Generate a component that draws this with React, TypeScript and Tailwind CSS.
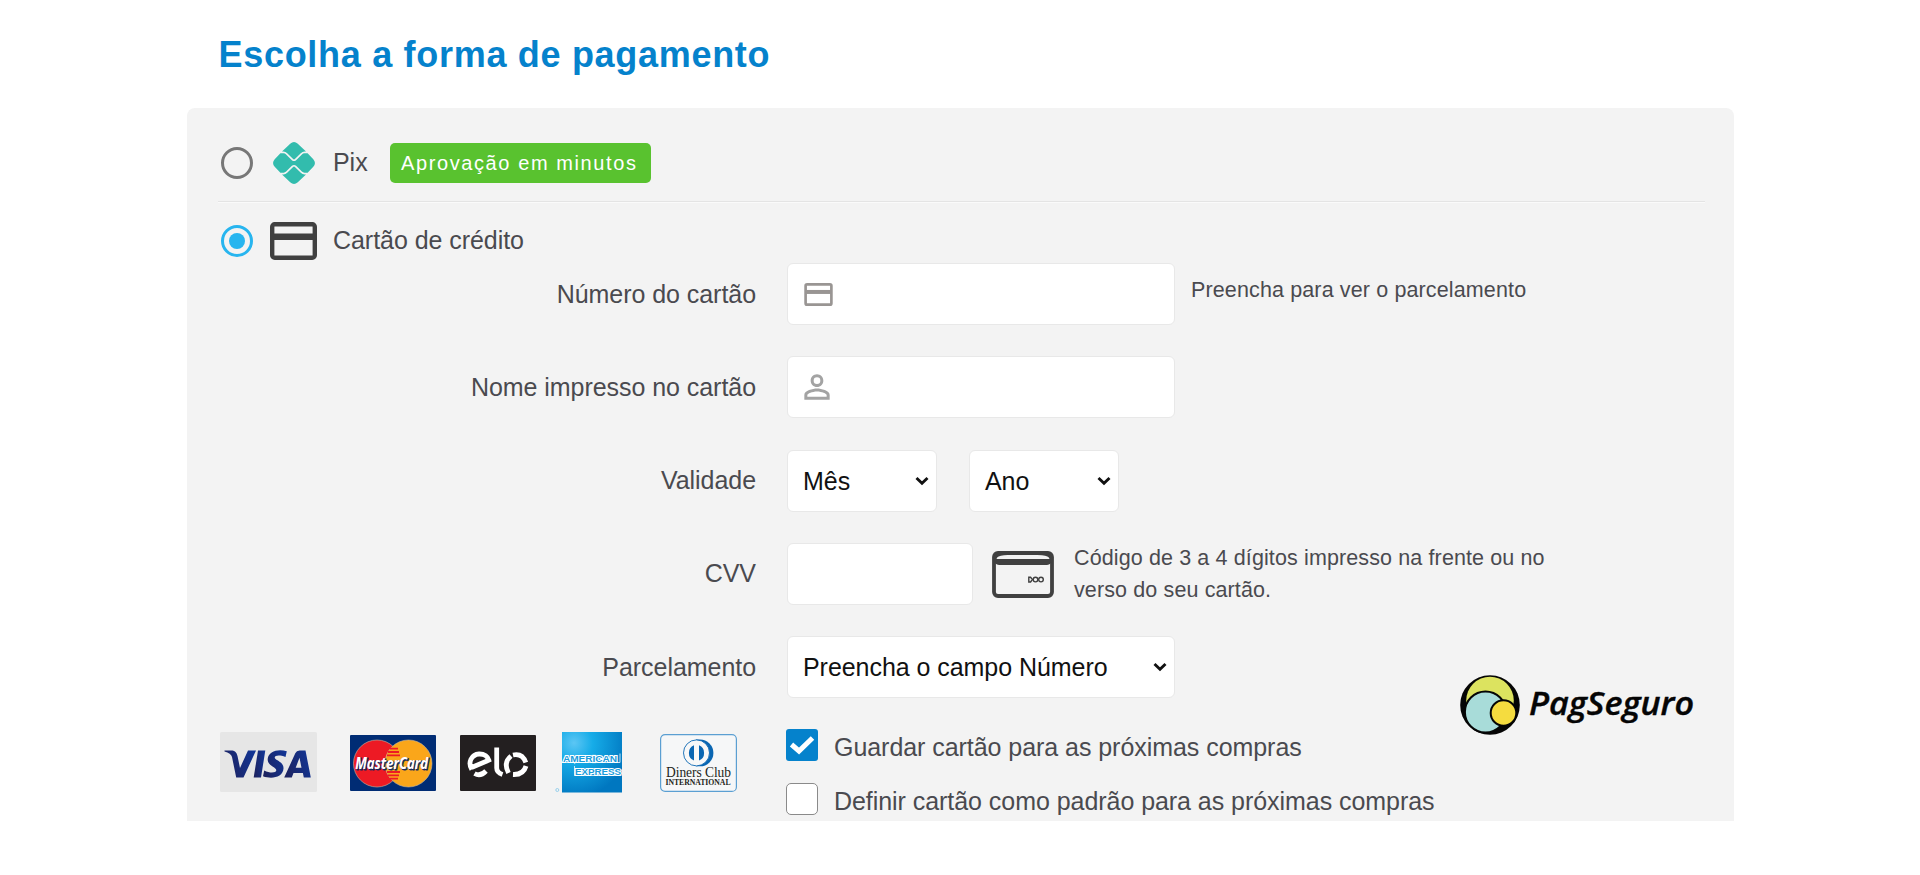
import type { ReactNode } from "react";
import { MdPersonOutline } from "react-icons/md";

const FIELD = "flex h-[62px] items-center rounded-md border border-[#e8e8e8] bg-white";

function Row({ label, children }: { label: string; children?: ReactNode }) {
  return (
    <div className="flex h-[62px] items-start">
      <div className="w-[538px] pt-[12.500px] text-right leading-9">{label}</div>
      <div className="ml-[31px] flex items-start">{children}</div>
    </div>
  );
}

function Chevron() {
  return (
    <svg className="h-[10px] w-[14px]" viewBox="0 0 14 10" fill="none">
      <path d="M1.500 2 L7 7.200 L12.500 2" stroke="#111" strokeWidth="2.900" />
    </svg>
  );
}

function Select({ text, width }: { text: string; width: string }) {
  return (
    <div className={`${FIELD} ${width} justify-between pr-[7px] pl-[15px] text-[#111]`}>
      <span className="leading-9">{text}</span>
      <Chevron />
    </div>
  );
}

function CardIcon({ className }: { className: string }) {
  return (
    <svg className={className} viewBox="0 0 47 38" fill="none" stroke="currentColor">
      <rect x="2.200" y="2.200" width="42.600" height="33.600" rx="2.500" strokeWidth="4.400" />
      <path d="M2 14.800 H45" strokeWidth="6.600" />
    </svg>
  );
}

function PixIcon() {
  return (
    <svg className="h-[42px] w-[42px]" viewBox="0 0 42 42" fill="#32bcad">
      <path d="M9 9.600 L17.200 1.700 Q21 -1.600 24.800 1.700 L33 9.600 H31.600 Q29.400 9.600 27.800 11.200 L21.900 17 Q21 17.800 20.100 17 L14.200 11.200 Q12.600 9.600 10.400 9.600 Z" />
      <path d="M9 32.400 L17.200 40.300 Q21 43.600 24.800 40.300 L33 32.400 H31.600 Q29.400 32.400 27.800 30.800 L21.900 25 Q21 24.200 20.100 25 L14.200 30.800 Q12.600 32.400 10.400 32.400 Z" />
      <path d="M7.400 11.300 H10.600 Q12 11.300 13.100 12.400 L18.900 18.200 Q21 20 23.100 18.200 L28.900 12.400 Q30 11.300 31.400 11.300 H34.600 L40.300 17.200 Q43.600 21 40.300 24.800 L34.600 30.700 H31.400 Q30 30.700 28.900 29.600 L23.100 23.800 Q21 22 18.900 23.800 L13.100 29.600 Q12 30.700 10.600 30.700 H7.400 L1.700 24.800 Q-1.600 21 1.700 17.200 Z" />
    </svg>
  );
}

function CvvCard() {
  return (
    <svg className="h-[47px] w-[62px]" viewBox="0 0 62 47" fill="none">
      <rect x="2" y="2" width="58" height="43" rx="4" stroke="#404040" strokeWidth="3.800" />
      <path d="M2 2 H60 V14 H2 Z M4.500 8 H57.500 Q57 4.800 50 4.300 Q31 2.800 12 4.300 Q5 4.800 4.500 8 Z" fill="#404040" fillRule="evenodd" className="[clip-path:inset(0_round_5px)]" />
      <g stroke="#404040" strokeWidth="1.400">
        <path d="M36.800 26.200 H38.600 L40.400 28.500 L38.600 31 H36.800 Z" />
        <circle cx="43.500" cy="28.600" r="2.300" />
        <circle cx="49" cy="28.600" r="2.300" />
      </g>
    </svg>
  );
}

function Visa() {
  return (
    <svg className="h-[60px] w-[97px]" viewBox="0 0 97 60">
      <defs>
        <linearGradient id="visa" x1="0" x2="1" y1="0.6" y2="0.3">
          <stop offset="0" stopColor="#1d2360" />
          <stop offset="1" stopColor="#123595" />
        </linearGradient>
      </defs>
      <rect width="97" height="60" rx="1.500" fill="#e6e6e6" />
      <path d="M4.500 18.600 H12.500 Q16 18.800 17.500 24 L20 36 L28 18.600 H36 L23.500 45.500 H16.200 L12 25 Q11 21.500 4.500 19.600 Z" fill="url(#visa)" />
      <path d="M38 18.600 H45.300 L41 45.500 H33.700 Z" fill="url(#visa)" />
      <path d="M66.800 19.300 L65.500 25 C59.500 22.600 54.600 23.300 54.700 25.600 C54.900 28.600 64 29.600 63.500 36.600 C63 45.600 51.500 47.500 43 44.300 L44.200 38.500 C50 41.500 56.200 41 56.300 38.300 C56.400 35 47.300 34 47.700 27 C48.300 18.600 59.200 16.500 66.800 19.300 Z" fill="url(#visa)" />
      <path fillRule="evenodd" d="M79.600 18.600 H85.500 L90.800 45.500 H83.800 L82.900 41 H73.500 L71.800 45.500 H64.200 L75.300 21.300 Q76.500 18.600 79.600 18.600 Z M79.500 25.800 L75.700 35.700 H81.500 Z" fill="url(#visa)" />
    </svg>
  );
}

function Mastercard() {
  return (
    <svg className="h-[56px] w-[86px] overflow-visible" viewBox="0 0 86 56">
      <rect width="86" height="56" rx="1" fill="#002c74" />
      <g stroke="#c9b9a0" strokeWidth="0.600">
        <circle cx="27" cy="28.500" r="23.500" fill="#ed1a24" />
        <circle cx="58.500" cy="28.500" r="23.500" fill="#faa61a" />
      </g>
      <path d="M40 13.700 H48 M38 17 H49 M37 20.300 H50 M37 37 H50 M38 40.300 H49 M40 43.600 H48" stroke="#ed1a24" strokeWidth="1.800" />
      <g fontFamily="Open Sans, sans-serif" fontWeight="700" fontStyle="italic" fontSize="15.500">
        <text x="6.200" y="34.800" textLength="73" lengthAdjust="spacingAndGlyphs" fill="#10285f" stroke="#10285f" strokeWidth="0.800">MasterCard</text>
        <text x="5.200" y="33.800" textLength="73" lengthAdjust="spacingAndGlyphs" fill="#fff">MasterCard</text>
      </g>
    </svg>
  );
}

function Elo() {
  return (
    <svg className="h-[56px] w-[76px]" viewBox="0 0 76 56" fill="none">
      <rect width="76" height="56" rx="1" fill="#231f20" />
      <g stroke="#fff" strokeWidth="4.800">
        <path d="M11.800 34.500 C7.500 27.500 11.500 19.500 19 19 C24.500 18.800 28 22 28.800 25.200 L11.500 32.500" />
        <path d="M14.500 38.500 Q20.500 41.800 26 36" />
        <path d="M36.700 12.500 V33 Q36.700 37.500 42.500 39.500" />
        <path d="M51 21 Q43 27.500 48.500 38" />
        <path d="M53 20 Q62.500 18 65.800 27.500" />
        <path d="M66 31 Q63.500 40 53 39.500" />
      </g>
    </svg>
  );
}

function Amex() {
  return (
    <svg className="h-[61px] w-[68px]" viewBox="0 0 68 61">
      <defs>
        <radialGradient id="amex" cx="0.200" cy="0.180" r="0.900">
          <stop offset="0" stopColor="#5cc6f4" />
          <stop offset="0.350" stopColor="#16ace8" />
          <stop offset="1" stopColor="#0077c0" />
        </radialGradient>
      </defs>
      <rect x="7" width="60" height="60.500" fill="url(#amex)" />
      <path d="M7.500 30.500 H65 V21.500 M19.500 34 V43.500 H66.500" fill="none" stroke="#d9effa" strokeWidth="0.900" />
      <g fontFamily="Liberation Sans, sans-serif" fontWeight="700" fontSize="9.500" fill="#1a9cdc" stroke="#fff" strokeWidth="2.200" paintOrder="stroke">
        <text x="8" y="29.500" textLength="54" lengthAdjust="spacingAndGlyphs">AMERICAN</text>
        <text x="20" y="42.500" textLength="46" lengthAdjust="spacingAndGlyphs">EXPRESS</text>
      </g>
      <circle cx="2.300" cy="58" r="1.500" fill="none" stroke="#8ccbea" strokeWidth="0.900" />
    </svg>
  );
}

function Diners() {
  return (
    <svg className="h-[58px] w-[77px]" viewBox="0 0 77 58">
      <rect x="0.600" y="0.600" width="75.800" height="56.800" rx="4.500" fill="#f6f7f8" stroke="#5b9fd2" strokeWidth="1.200" />
      <path d="M36 5.500 H40 A13.300 13.300 0 0 1 40 32.300 H36 Z" fill="#0a66b2" />
      <circle cx="36.500" cy="18.900" r="13" fill="#f8f8f8" stroke="#0a66b2" strokeWidth="0.900" />
      <path d="M34 11.300 A8.200 8.200 0 0 0 34 26.500 Z M39 11.300 A8.200 8.200 0 0 1 39 26.500 Z" fill="#0a66b2" />
      <g fontFamily="Liberation Serif, serif" fill="#231f20">
        <text x="6" y="43" fontSize="14.500" textLength="65" lengthAdjust="spacingAndGlyphs">Diners Club</text>
        <text x="5.500" y="51" fontSize="7.500" fontWeight="700" textLength="65" lengthAdjust="spacingAndGlyphs">INTERNATIONAL</text>
      </g>
    </svg>
  );
}

function PagSeguro() {
  return (
    <svg className="h-[62px] w-[240px]" viewBox="0 0 240 62">
      <circle cx="30" cy="30" r="29.800" fill="#050505" />
      <circle cx="30" cy="25.600" r="23.800" fill="#dce35f" />
      <circle cx="25.500" cy="37" r="20.600" fill="#a8dcd9" stroke="#050505" strokeWidth="2" />
      <circle cx="43.500" cy="38" r="12.800" fill="#f5dc3f" stroke="#050505" strokeWidth="2" />
      <text x="69" y="40" fontFamily="Open Sans, sans-serif" fontWeight="600" fontStyle="italic" fontSize="33" textLength="165" lengthAdjust="spacingAndGlyphs" fill="#050505" stroke="#050505" strokeWidth="0.400">PagSeguro</text>
    </svg>
  );
}

export default function App() {
  return (
    <main className="h-[875px] w-[1920px] overflow-hidden bg-white pl-[187px] font-['Liberation_Sans',Arial,sans-serif] text-[25px] tracking-[-0.050px] text-[#4a4a4f]">
      <h1 className="h-[108px] pt-[31px] pl-[31.500px] text-[36px] leading-[48px] font-bold tracking-[0.700px] text-[#0582cc]">
        Escolha a forma de pagamento
      </h1>
      <section className="h-[713px] w-[1547px] overflow-hidden rounded-t-lg bg-[#f3f3f3] pr-[29px] pl-[31px]">
        <div className="flex h-[94px] items-center border-b border-[#e4e4e4] pt-4">
          <span className="ml-[3px] size-8 rounded-full border-[3px] border-[#777]" />
          <span className="ml-5"><PixIcon /></span>
          <span className="ml-[18px] w-[57px]">Pix</span>
          <span className="flex h-10 w-[261px] items-center rounded-[5px] bg-[#59c22f] pl-[11px] text-[20px] tracking-[1.600px] whitespace-nowrap text-white">
            Aprovação em minutos
          </span>
        </div>
        <div className="flex h-[61px] items-center border-t border-[#fafafa] pt-[15px]">
          <span className="ml-[3px] flex size-8 items-center justify-center rounded-full border-[3px] border-[#27b5ef]">
            <span className="size-4 rounded-full bg-[#27b5ef]" />
          </span>
          <CardIcon className="ml-[17px] h-[38px] w-[47px] text-[#404040]" />
          <span className="ml-[16px]">Cartão de crédito</span>
        </div>
        <div className="flex flex-col gap-[31.300px]">
          <Row label="Número do cartão">
            <div className={`${FIELD} w-[388px] pl-4`}>
              <CardIcon className="h-[23px] w-[29px] text-[#999593]" />
            </div>
            <span className="pt-3 pl-4 text-[21.500px] leading-[30px] tracking-[0.130px]">Preencha para ver o parcelamento</span>
          </Row>
          <Row label="Nome impresso no cartão">
            <div className={`${FIELD} w-[388px] pl-[10px]`}>
              <MdPersonOutline className="size-[38px] text-[#a3a3a3]" />
            </div>
          </Row>
          <Row label="Validade">
            <Select text="Mês" width="w-[150px]" />
            <span className="w-8" />
            <Select text="Ano" width="w-[150px]" />
          </Row>
          <Row label="CVV">
            <div className={`${FIELD} w-[186px]`} />
            <span className="pt-2 pl-[19px]"><CvvCard /></span>
            <p className="-mt-px w-[500px] pl-5 text-[21.500px] leading-[32.500px] tracking-[0.120px]">
              Código de 3 a 4 dígitos impresso na frente ou no verso do seu cartão.
            </p>
          </Row>
          <Row label="Parcelamento">
            <Select text="Preencha o campo Número" width="w-[388px]" />
          </Row>
        </div>
        <div className="flex">
          <div className="flex w-[568px] items-start pt-[34px] pl-0.5">
            <Visa />
            <span className="mt-[3px] ml-[33px]"><Mastercard /></span>
            <span className="mt-[3px] ml-6"><Elo /></span>
            <span className="ml-[19px]"><Amex /></span>
            <span className="mt-0.5 ml-[37px]"><Diners /></span>
          </div>
          <div className="w-[674px] pt-[31px]">
            <div className="flex h-8 items-center">
              <span className="flex size-8 items-center justify-center rounded-[3px] bg-[#0582cc]">
                <svg className="h-[20px] w-[26px]" viewBox="0 0 26 20" fill="none">
                  <path d="M2.500 9.500 L10 16 L23.500 3" stroke="#fff" strokeWidth="5" />
                </svg>
              </span>
              <span className="pt-[5px] pl-4">Guardar cartão para as próximas compras</span>
            </div>
            <div className="mt-[22px] flex h-8 items-center">
              <span className="size-8 rounded-[5px] border-[1.500px] border-[#8a8a8a] bg-white" />
              <span className="pt-[5px] pl-4">Definir cartão como padrão para as próximas compras</span>
            </div>
          </div>
          <div className="-mt-[23px] w-[240px]"><PagSeguro /></div>
        </div>
      </section>
    </main>
  );
}
